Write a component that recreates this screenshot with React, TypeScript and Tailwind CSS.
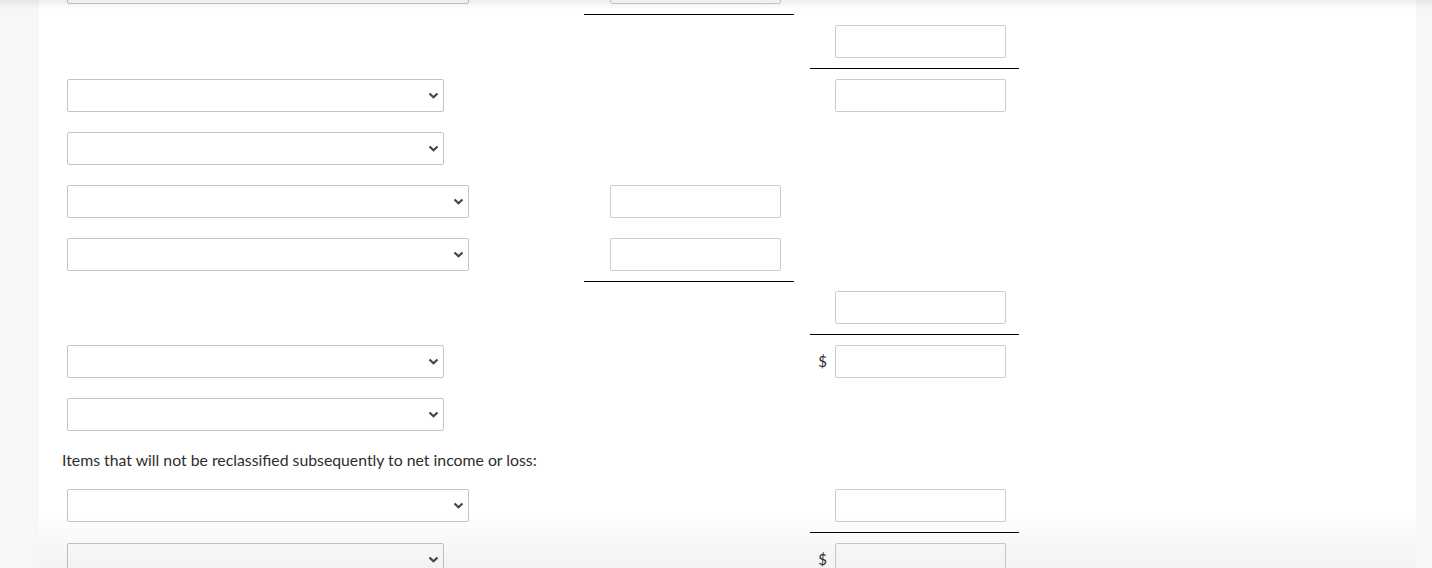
import React from 'react';

type Row =
  | { kind: 'text'; label: string }
  | {
      kind: 'row';
      select?: 'wide' | 'narrow';
      col2?: boolean;
      col2Line?: boolean;
      col3?: boolean;
      col3Line?: boolean;
      dollar?: boolean;
      extra?: boolean;
    };

const ROWS: Row[] = [
  { kind: 'row', select: 'wide', col2: true, col2Line: true, extra: true },
  { kind: 'row', col3: true, col3Line: true, extra: true },
  { kind: 'row', select: 'narrow', col3: true },
  { kind: 'row', select: 'narrow' },
  { kind: 'row', select: 'wide', col2: true },
  { kind: 'row', select: 'wide', col2: true, col2Line: true },
  { kind: 'row', col3: true, col3Line: true, extra: true },
  { kind: 'row', select: 'narrow', col3: true, dollar: true },
  { kind: 'row', select: 'narrow' },
  { kind: 'text', label: 'Items that will not be reclassified subsequently to net income or loss:' },
  { kind: 'row', select: 'wide', col3: true, col3Line: true, extra: true },
  { kind: 'row', select: 'narrow', col3: true, dollar: true },
];

function Chevron() {
  return (
    <svg width="11" height="7" viewBox="0 0 11 7" className="shrink-0">
      <polyline points="1.5,1.5 5.5,5.2 9.5,1.5" fill="none" stroke="#454545" strokeWidth="2.2" />
    </svg>
  );
}

function SelectBox({ wide }: { wide: boolean }) {
  return (
    <div
      className={`ml-[5px] h-[33px] ${wide ? 'w-[402px]' : 'w-[377px]'} bg-white border border-[#c4c4c4] rounded-[2px] flex items-center justify-end pr-[4px]`}
    >
      <Chevron />
    </div>
  );
}

function AmountBox() {
  return <div className="h-[33px] w-[171px] bg-white border border-[#cccccc] rounded-[2px]" />;
}

export default function App() {
  return (
    <div className="relative h-[568px] overflow-hidden bg-[#f7f7f7] font-['Lato','Liberation_Sans',sans-serif] text-[15.8px] text-[#2d2d2d]">
      <div className="ml-[39px] mr-[16px] bg-white min-h-[700px] -mt-[38px] pl-[23px]">
        {ROWS.map((row, i) =>
          row.kind === 'text' ? (
            <div key={i} className="h-[38px] pb-[2px] flex items-center">
              {row.label}
            </div>
          ) : (
            <div key={i} className={`flex ${row.extra ? 'mb-[1px]' : ''}`}>
              <div className="w-[522px] pt-[9px]">
                {row.select && <SelectBox wide={row.select === 'wide'} />}
              </div>
              <div
                className={`w-[210px] h-[53px] pt-[9px] pr-[13px] flex justify-end border-b ${row.col2Line ? 'border-black' : 'border-transparent'}`}
              >
                {row.col2 && <AmountBox />}
              </div>
              <div
                className={`ml-[16px] w-[209px] h-[53px] pt-[9px] pr-[13px] flex justify-end border-b ${row.col3Line ? 'border-black' : 'border-transparent'}`}
              >
                {row.dollar && (
                  <span className="w-[25px] h-[33px] flex items-center justify-center text-[15px]">$</span>
                )}
                {row.col3 && <AmountBox />}
              </div>
            </div>
          )
        )}
      </div>

      {/* shadow from header above */}
      <div className="absolute top-0 left-0 right-0 h-[9px] bg-gradient-to-b from-black/[0.07] to-transparent" />
      {/* footer fade */}
      <div className="absolute bottom-0 left-[39px] right-[16px] h-[56px] bg-gradient-to-b from-transparent to-black/[0.05]" />
    </div>
  );
}
